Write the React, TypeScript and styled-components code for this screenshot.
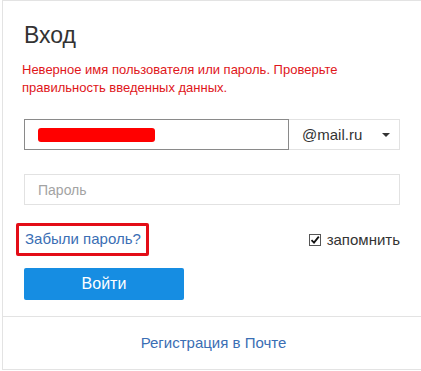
import React from 'react';
import styled, { createGlobalStyle } from 'styled-components';

const GlobalStyle = createGlobalStyle`
  html, body {
    margin: 0;
    padding: 0;
    background: #fff;
    overflow: hidden;
  }
  body {
    font-family: "Liberation Sans", Arial, sans-serif;
  }
`;

const Page = styled.div`
  padding-left: 2px;
`;

const Card = styled.div`
  width: 421px;
  border: 1px solid #e3e3e3;
  background: #fff;
`;

const Body = styled.div`
  padding: 17px 21px 16px 21px;
`;

const Title = styled.h1`
  margin: 0;
  font-size: 23px;
  line-height: 34px;
  font-weight: normal;
  color: #333;
`;

const ErrorText = styled.p`
  margin: 9px 0 0 -2px;
  width: 330px;
  font-size: 13px;
  line-height: 18px;
  color: #e0161a;
`;

const LoginRow = styled.div`
  display: flex;
  width: 376px;
  height: 31px;
  margin-top: 22px;
`;

const LoginField = styled.div`
  flex: 1;
  display: flex;
  align-items: center;
  padding-left: 13px;
  border: 1px solid #8a8a8a;
`;

const Redacted = styled.div`
  width: 117px;
  height: 14px;
  border-radius: 3px;
  background: #ff0000;
`;

const DomainSelect = styled.div`
  width: 111px;
  display: flex;
  align-items: center;
  justify-content: space-between;
  padding: 0 9px 0 13px;
  box-sizing: border-box;
  border: 1px solid #e2e2e2;
  border-left: none;
  font-size: 15px;
  color: #333;
`;

const Caret = styled.span`
  width: 0;
  height: 0;
  border-left: 4px solid transparent;
  border-right: 4px solid transparent;
  border-top: 4px solid #333;
`;

const PasswordField = styled.div`
  width: 376px;
  height: 31px;
  box-sizing: border-box;
  margin-top: 24px;
  padding-left: 13px;
  display: flex;
  align-items: center;
  border: 1px solid #e2e2e2;
  font-size: 14px;
  color: #a3a3a3;
`;

const OptionsRow = styled.div`
  display: flex;
  align-items: center;
  justify-content: space-between;
  width: 376px;
  margin-top: 18px;
`;

const ForgotBox = styled.div`
  margin-left: -8px;
  padding: 4px 5px 5px 6px;
  border: 3px solid #e30d17;
  border-radius: 2px;
`;

const Link = styled.a<{ $size?: number }>`
  font-size: ${p => p.$size ?? 15}px;
  line-height: 18px;
  color: #3a6eb4;
  text-decoration: none;
`;

const Remember = styled.label`
  display: flex;
  align-items: center;
  gap: 6px;
  font-size: 15px;
  color: #333;
`;

const SubmitButton = styled.button`
  display: block;
  margin-top: 12px;
  width: 160px;
  height: 32px;
  border: none;
  border-radius: 2px;
  background: #168de2;
  color: #fff;
  font-family: "Liberation Sans", Arial, sans-serif;
  font-size: 16px;
  font-weight: normal;
`;

const Footer = styled.div`
  border-top: 1px solid #e3e3e3;
  height: 52px;
  display: flex;
  align-items: center;
  justify-content: center;
`;

function CheckIcon() {
  return (
    <svg width="12" height="12" viewBox="0 0 12 12">
      <rect x="0.5" y="0.5" width="11" height="11" fill="#fff" stroke="#555" />
      <path d="M2.5 6.2 L5 8.6 L9.8 2.6" fill="none" stroke="#111" strokeWidth="1.8" />
    </svg>
  );
}

export default function App() {
  return (
    <Page>
      <GlobalStyle />
      <Card>
        <Body>
          <Title>Вход</Title>
          <ErrorText>
            Неверное имя пользователя или пароль. Проверьте правильность введенных данных.
          </ErrorText>
          <LoginRow>
            <LoginField>
              <Redacted />
            </LoginField>
            <DomainSelect>
              @mail.ru
              <Caret />
            </DomainSelect>
          </LoginRow>
          <PasswordField>Пароль</PasswordField>
          <OptionsRow>
            <ForgotBox>
              <Link href="#">Забыли пароль?</Link>
            </ForgotBox>
            <Remember>
              <CheckIcon />
              запомнить
            </Remember>
          </OptionsRow>
          <SubmitButton>Войти</SubmitButton>
        </Body>
        <Footer>
          <Link href="#" $size={15}>Регистрация в Почте</Link>
        </Footer>
      </Card>
    </Page>
  );
}
